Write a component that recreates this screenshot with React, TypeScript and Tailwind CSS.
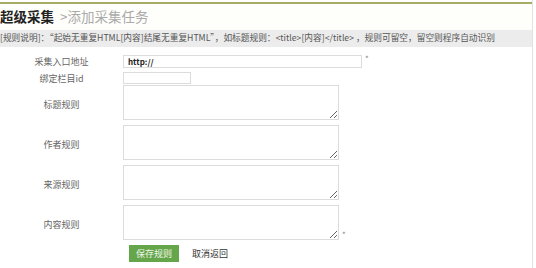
import React from "react";

const rows = ["标题规则", "作者规则", "来源规则", "内容规则"];

export default function App() {
  return (
    <div className="w-[533px] h-[268px] border-r border-[#e2e2e2] bg-white font-['Noto_Sans_CJK_SC','Noto_Sans',sans-serif] overflow-hidden">
      <div className="h-[2px]" />
      <div className="border-t-2 border-[#a7ad66]" />
      <div className="h-[26px] flex items-center whitespace-nowrap bg-[#fefefa]">
        <span className="text-[13.5px] font-bold text-[#222] leading-none">超级采集</span>
        <span className="ml-[6px] text-[13.5px] text-[#aaa] leading-none">&gt;添加采集任务</span>
      </div>
      <div className="h-[17px] bg-[#ececec] flex items-center whitespace-nowrap text-[8.7px] text-[#555] leading-none">
        [规则说明]：“起始无重复HTML[内容]结尾无重复HTML”，如标题规则：&lt;title&gt;[内容]&lt;/title&gt; ，规则可留空，留空则程序自动识别
      </div>
      <div className="pt-[8px]">
        <div className="flex items-center">
          <div className="w-[123px] text-center text-[9px] text-[#666] leading-none">采集入口地址</div>
          <input
            defaultValue="http://"
            className="w-[239px] h-[13px] border border-[#dcdcdc] px-[4px] text-[8px] text-[#222] font-semibold outline-none"
          />
          <span className="ml-[3px] self-start text-[8px] text-[#888] leading-none">*</span>
        </div>
        <div className="flex items-center mt-[4px]">
          <div className="w-[123px] text-center text-[9px] text-[#666] leading-none">绑定栏目id</div>
          <input className="w-[68px] h-[12px] border border-[#dcdcdc] outline-none" />
        </div>
        {rows.map((r, i) => (
          <div key={r} className={`flex items-center ${i === 0 ? "mt-[1px]" : "mt-[5px]"}`}>
            <div className="w-[123px] pt-[4px] text-center text-[9px] text-[#666] leading-none">{r}</div>
            <textarea className="w-[216px] h-[35px] border border-[#dcdcdc] outline-none block" />
            {i === 3 && <span className="ml-[3px] self-end mb-[1px] text-[8px] text-[#888] leading-none">*</span>}
          </div>
        ))}
        <div className="flex items-center mt-[5px] pl-[129px]">
          <button className="w-[50px] h-[17px] bg-[#66a64a] text-[#eef6ea] text-[9px] leading-none flex items-center justify-center">
            保存规则
          </button>
          <span className="ml-[13px] text-[9px] text-[#333] leading-none">取消返回</span>
        </div>
      </div>
    </div>
  );
}
